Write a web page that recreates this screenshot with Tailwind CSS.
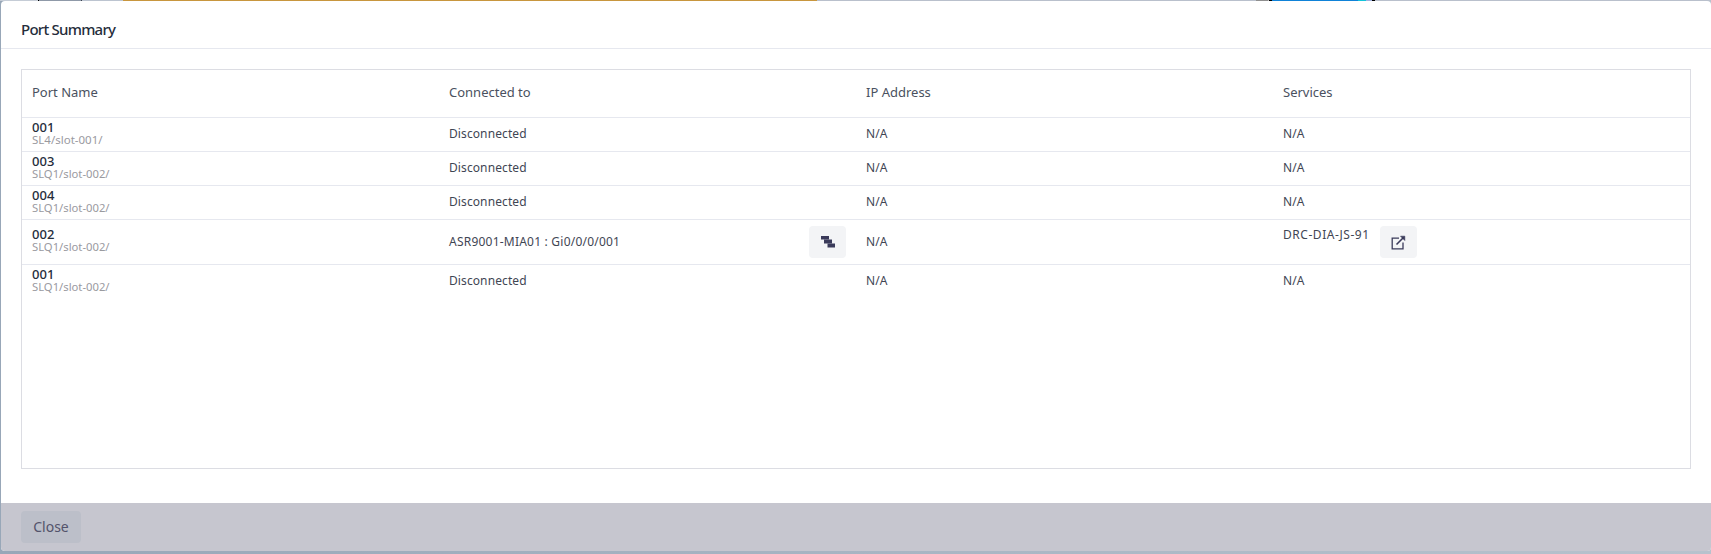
<!DOCTYPE html>
<html lang="en">
<head>
  <meta charset="UTF-8">
  <title>Port Summary</title>
  <script src="https://cdn.jsdelivr.net/npm/@tailwindcss/browser@4"></script>
</head>
<body class="h-[554px] overflow-hidden flex flex-col bg-gradient-to-r from-[#98a7b8] to-[#b7c2cd] font-['Noto_Sans',sans-serif] text-[#3f4654]">

  <!-- Page behind the dialog, only its top edge shows -->
  <div class="flex h-px shrink-0 bg-[#b9c0cc]">
    <div class="w-[38px] bg-[#c5ccd6]"></div>
    <div class="w-px bg-black"></div>
    <div class="w-[42px] bg-[#8f99a8]"></div>
    <div class="w-px bg-[#3a4250]"></div>
    <div class="w-[41px] bg-[#bcc4d0]"></div>
    <div class="w-[694px] bg-[#c8963e]"></div>
    <div class="w-[439px]"></div>
    <div class="w-[12px] bg-[#8f8f8f]"></div>
    <div class="w-[1px] bg-[#c0c0c0]"></div>
    <div class="w-[3px] bg-black"></div>
    <div class="w-[86px] bg-[#0f82d8]"></div>
    <div class="w-[8px] bg-[#12c4d8]"></div>
    <div class="w-[6px] bg-[#9fb0e0]"></div>
    <div class="w-[3px] bg-black"></div>
  </div>

  <div class="ml-px h-[550px] shrink-0 bg-white rounded-[4px] overflow-hidden flex flex-col">
    <div class="h-[48px] shrink-0 border-b border-[#e6e8ef] px-5 pt-[10px] flex items-center">
      <h2 class="text-[15px] font-medium text-[#252d3b] tracking-[-0.75px]">Port Summary</h2>
    </div>

    <div class="flex-1 px-5 pt-5 pb-[34px] flex">
      <div class="flex-1 border border-[#dcdde3] text-[12px] tracking-[0.1px]">
        <div class="grid grid-cols-4 h-[48px] pb-[2px] items-center border-b border-[#e6e8ef] text-[13px] tracking-normal text-[#4a5160]">
          <div class="px-2.5">Port Name</div>
          <div class="px-2.5">Connected to</div>
          <div class="px-2.5">IP Address</div>
          <div class="px-2.5">Services</div>
        </div>

        <div class="grid grid-cols-4 h-[34px] pb-[2px] items-center border-b border-[#e6e8ef]">
          <div class="px-2.5 pb-[2px]">
            <div class="text-[13px] leading-[13px] text-[#252d3b] font-medium">001</div>
            <div class="text-[11.5px] leading-[11px] tracking-normal text-[#9a9a9f]">SL4/slot-001/</div>
          </div>
          <div class="px-2.5">Disconnected</div>
          <div class="px-2.5">N/A</div>
          <div class="px-2.5">N/A</div>
        </div>

        <div class="grid grid-cols-4 h-[34px] pb-[2px] items-center border-b border-[#e6e8ef]">
          <div class="px-2.5 pb-[2px]">
            <div class="text-[13px] leading-[13px] text-[#252d3b] font-medium">003</div>
            <div class="text-[11.25px] leading-[11px] tracking-normal text-[#9a9a9f]">SLQ1/slot-002/</div>
          </div>
          <div class="px-2.5">Disconnected</div>
          <div class="px-2.5">N/A</div>
          <div class="px-2.5">N/A</div>
        </div>

        <div class="grid grid-cols-4 h-[34px] pb-[2px] items-center border-b border-[#e6e8ef]">
          <div class="px-2.5 pb-[2px]">
            <div class="text-[13px] leading-[13px] text-[#252d3b] font-medium">004</div>
            <div class="text-[11.25px] leading-[11px] tracking-normal text-[#9a9a9f]">SLQ1/slot-002/</div>
          </div>
          <div class="px-2.5">Disconnected</div>
          <div class="px-2.5">N/A</div>
          <div class="px-2.5">N/A</div>
        </div>

        <div class="grid grid-cols-4 h-[45px] items-center border-b border-[#e6e8ef]">
          <div class="px-2.5 pb-[4px]">
            <div class="text-[13px] leading-[13px] text-[#252d3b] font-medium">002</div>
            <div class="text-[11.25px] leading-[11px] tracking-normal text-[#9a9a9f]">SLQ1/slot-002/</div>
          </div>
          <div class="px-2.5 flex items-center justify-between">
            <span class="tracking-[0.22px]">ASR9001-MIA01 : Gi0/0/0/001</span>
            <button class="w-[37px] h-[32px] rounded-[4px] bg-[#f3f4f6] flex items-center justify-center">
              <svg width="14" height="12" viewBox="0 0 14 12" fill="#3a3a5a">
                <rect x="0" y="0" width="8" height="3.5"/>
                <rect x="3" y="3.5" width="8" height="4"/>
                <rect x="6.5" y="7.5" width="7.5" height="4"/>
              </svg>
            </button>
          </div>
          <div class="px-2.5">N/A</div>
          <div class="px-2.5 flex items-center gap-[10px]">
            <span class="self-start leading-[18px] tracking-[0.55px]">DRC-DIA-JS-91</span>
            <button class="w-[37px] h-[32px] rounded-[4px] bg-[#f3f4f6] flex items-center justify-center">
              <svg width="15" height="15" viewBox="0 0 15 15" fill="none" stroke="#3a3a5a" stroke-width="1.3">
                <path d="M8 3.2H1.2v10.6H12V7.5"/>
                <path d="M5.5 9.5 12.5 2.5" stroke-width="1.6"/>
                <path d="M9.5 1.2h4.3v4.3z" fill="#3a3a5a" stroke-width="0.6"/>
              </svg>
            </button>
          </div>
        </div>

        <div class="grid grid-cols-4 h-[34px] pb-[2px] items-center">
          <div class="px-2.5 pb-[2px]">
            <div class="text-[13px] leading-[13px] text-[#252d3b] font-medium">001</div>
            <div class="text-[11.25px] leading-[11px] tracking-normal text-[#9a9a9f]">SLQ1/slot-002/</div>
          </div>
          <div class="px-2.5">Disconnected</div>
          <div class="px-2.5">N/A</div>
          <div class="px-2.5">N/A</div>
        </div>
      </div>
    </div>

    <div class="h-[48px] shrink-0 bg-[#c6c6cf] px-5 flex items-center">
      <button class="w-[60px] h-[32px] pb-[2px] rounded-[4px] bg-[#bcbfc9] text-[14px] text-[#53536b]">Close</button>
    </div>
  </div>
</body>
</html>
